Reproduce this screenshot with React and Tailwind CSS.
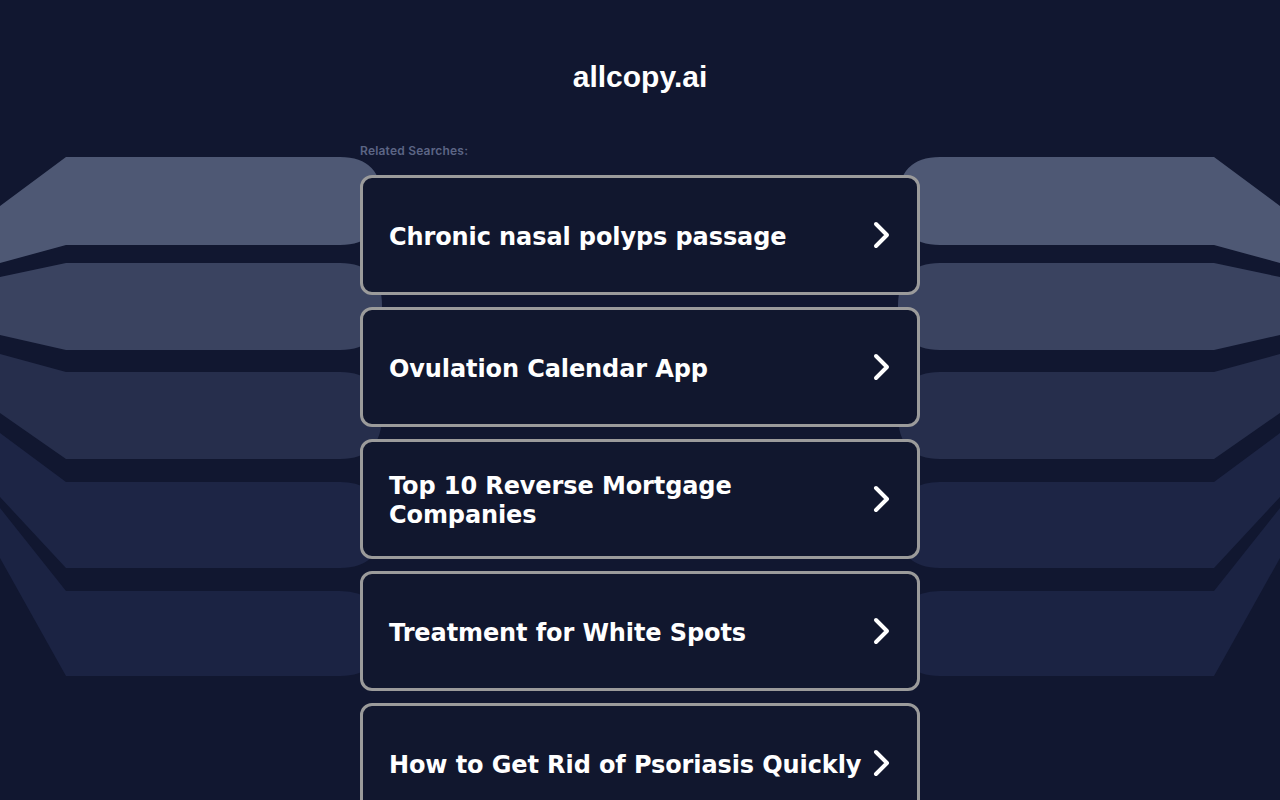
const searches = [
  'Chronic nasal polyps passage',
  'Ovulation Calendar App',
  'Top 10 Reverse Mortgage Companies',
  'Treatment for White Spots',
  'How to Get Rid of Psoriasis Quickly',
];

// left-side bands; right side is mirrored
const bands = [
  { d: 'M0,206 L66,157 L340,157 Q382,157 382,201 Q382,245 340,245 L66,245 L0,263 Z', fill: '#4e5874' },
  { d: 'M0,277 L66,263 L340,263 Q382,263 382,306 Q382,350 340,350 L66,350 L0,335 Z', fill: '#3a4360' },
  { d: 'M0,354 L66,372 L340,372 Q382,372 382,415 Q382,459 340,459 L66,459 L0,413 Z', fill: '#262e4c' },
  { d: 'M0,433 L66,482 L340,482 Q382,482 382,525 Q382,568 340,568 L66,568 L0,497 Z', fill: '#1d2545' },
  { d: 'M0,508 L66,591 L340,591 Q382,591 382,633 Q382,676 340,676 L66,676 L0,558 Z', fill: '#1b2343' },
];

function Backdrop() {
  return (
    <svg className="absolute inset-0 pointer-events-none" width="1280" height="800" viewBox="0 0 1280 800">
      {bands.map((b, i) => (
        <path key={'l' + i} d={b.d} fill={b.fill} />
      ))}
      <g transform="translate(1280,0) scale(-1,1)">
        {bands.map((b, i) => (
          <path key={'r' + i} d={b.d} fill={b.fill} />
        ))}
      </g>
    </svg>
  );
}

function Chevron() {
  return (
    <svg width="18" height="28" viewBox="0 0 18 28" fill="none" className="shrink-0">
      <polyline points="3,3 14,14 3,25" stroke="white" strokeWidth="4" strokeLinecap="round" strokeLinejoin="round" />
    </svg>
  );
}

export default function App() {
  return (
    <div className="relative min-h-screen h-[800px] overflow-hidden bg-[#111730]">
      <Backdrop />
      <div className="relative w-[560px] mx-auto">
        <h1 className="pt-[58px] text-center text-white font-bold text-[30px] leading-[38px] font-['Liberation_Sans',Arial,sans-serif]">
          allcopy.ai
        </h1>
        <p className="mt-[47px] text-[12px] leading-[16px] text-[#5c6585] font-semibold tracking-[0.2px] font-['Inter',sans-serif]">
          Related Searches:
        </p>
        <div className="mt-[16px] flex flex-col gap-[12px]">
          {searches.map((s) => (
            <a
              key={s}
              href="#"
              className="flex items-center justify-between gap-1 h-[120px] rounded-[12px] border-[3px] border-[#9b9b9b] bg-[#11172e] pl-[26px] pr-[26px]"
            >
              <span className="flex-1 min-w-0 pt-[4px] text-white font-bold text-[24px] leading-[29px] tracking-[-0.1px] font-['DejaVu_Sans',Verdana,sans-serif]">
                {s}
              </span>
              <Chevron />
            </a>
          ))}
        </div>
      </div>
    </div>
  );
}
